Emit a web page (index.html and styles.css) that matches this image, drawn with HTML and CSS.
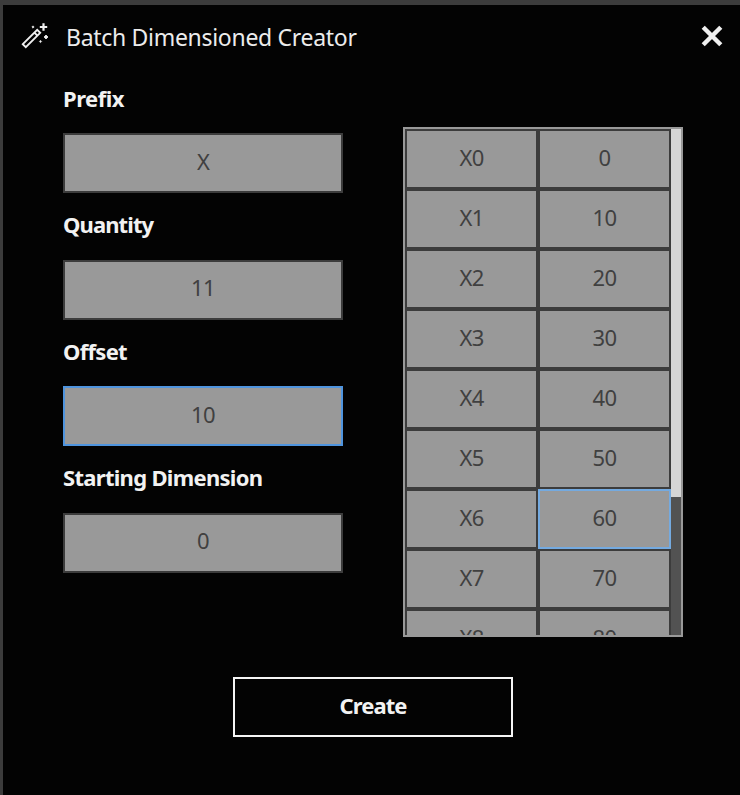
FILE: index.html
```html
<!DOCTYPE html>
<html lang="en">
<head>
<meta charset="utf-8">
<title>Batch Dimensioned Creator</title>
<link rel="stylesheet" href="styles.css">
</head>
<body>
<main class="window">
  <header class="titlebar">
    <svg class="wand" width="28" height="28" viewBox="0 0 28 28" fill="none" stroke="#f0f0f0">
      <path d="M1.8 22.2 L16.2 7.8 L19.2 10.8 L4.8 25.2 Z M13.4 10.6 L16.4 13.6" stroke-width="1.9"/>
      <path d="M22.5 1.3 V8.7 M18.8 5 H26.2" stroke-width="2.2"/>
      <path d="M25 13 L27 15 L25 17 L23 15 Z" fill="#f0f0f0" stroke-width="0.8"/>
      <path d="M12 3.8 L13.2 5 L12 6.2 L10.8 5 Z M19.5 18.3 L20.7 19.5 L19.5 20.7 L18.3 19.5 Z" fill="#f0f0f0" stroke-width="0.5"/>
    </svg>
    <h1 class="title">Batch Dimensioned Creator</h1>
    <svg class="close" width="22" height="22" viewBox="0 0 22 22" stroke="#f0f0f0" stroke-width="4.4">
      <path d="M2.2 2.2 L19.8 19.8 M19.8 2.2 L2.2 19.8"/>
    </svg>
  </header>
  <div class="content">
    <section class="fields">
      <div class="field"><div class="label prefix">Prefix</div><div class="box">X</div></div>
      <div class="field"><div class="label quantity">Quantity</div><div class="box">11</div></div>
      <div class="field"><div class="label offset">Offset</div><div class="box focused">10</div></div>
      <div class="field"><div class="label starting">Starting Dimension</div><div class="box">0</div></div>
    </section>
    <section class="list">
      <div class="cells">
        <div class="cell">X0</div><div class="cell">0</div>
        <div class="cell">X1</div><div class="cell">10</div>
        <div class="cell">X2</div><div class="cell">20</div>
        <div class="cell">X3</div><div class="cell">30</div>
        <div class="cell">X4</div><div class="cell">40</div>
        <div class="cell">X5</div><div class="cell">50</div>
        <div class="cell">X6</div><div class="cell active">60</div>
        <div class="cell">X7</div><div class="cell">70</div>
        <div class="cell">X8</div><div class="cell">80</div>
      </div>
      <div class="track"><div class="thumb"></div></div>
    </section>
  </div>
  <div class="create">Create</div>
</main>
</body>
</html>
```
FILE: styles.css
```css
* { box-sizing: border-box; }
body {
  margin: 0;
  background: #030303;
  color: #f2f2f2;
  font-family: "Noto Sans", "Open Sans", sans-serif;
  font-size: 22px;
}
.window {
  height: 795px;
  border-top: 5px solid #3c3c3c;
  border-left: 3px solid #3c3c3c;
  overflow: hidden;
}
.titlebar {
  display: flex;
  align-items: center;
  height: 64px;
  padding: 0 17px 0 18px;
}
.wand { margin-bottom: 2px; }
.title {
  flex: 1;
  margin: 0 0 0 17px;
  font-size: 23px;
  font-weight: 400;
  line-height: 30px;
  letter-spacing: -0.3px;
  color: #ececec;
}
.close { margin-bottom: 2px; }
.content {
  display: flex;
  gap: 60px;
  padding-left: 60px;
  height: 568px;
}
.fields { width: 280px; padding-top: 14px; }
.field { height: 126.6px; }
.label {
  height: 50px;
  line-height: 31px;
  font-weight: 700;
  font-size: 22px;
  letter-spacing: -0.7px;
}
.field:nth-child(even) .label { line-height: 29px; }
.prefix { letter-spacing: -0.5px; }
.quantity { letter-spacing: -0.9px; }
.box {
  height: 60px;
  border: 2px solid #3c3c3c;
  background: #999;
  color: #404040;
  text-align: center;
  line-height: 53px;
  letter-spacing: -0.7px;
}
.field:nth-child(even) .box { line-height: 51px; }
.box.focused { border-color: #4f94de; }
.list {
  display: flex;
  width: 280px;
  height: 510px;
  margin-top: 58px;
  border: 2px solid #999;
  overflow: hidden;
}
.cells {
  display: grid;
  grid-template-columns: 133px 133px;
  grid-auto-rows: 60px;
}
.cell {
  border: 2px solid #3c3c3c;
  background: #999;
  color: #404040;
  text-align: center;
  line-height: 53px;
  letter-spacing: -0.7px;
}
.cell.active { border-color: #74aae0; }
.track { width: 10px; background: #525252; }
.thumb { height: 368px; background: #d6d6d6; }
.create {
  width: 280px;
  height: 60px;
  margin: 40px 0 0 230px;
  border: 2px solid #f5f5f5;
  text-align: center;
  font-weight: 700;
  line-height: 53px;
  letter-spacing: -0.9px;
}
```
